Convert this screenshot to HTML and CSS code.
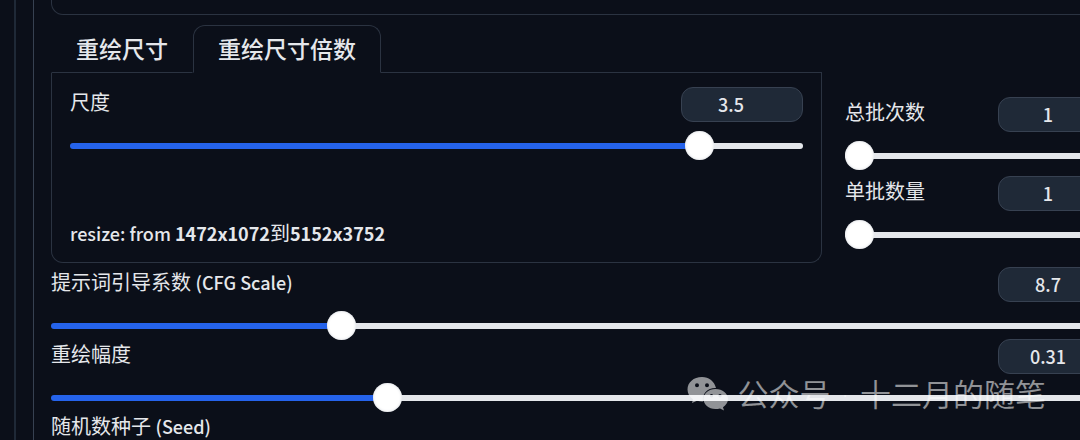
FILE: index.html
```html
<!DOCTYPE html>
<html lang="zh-CN">
<head>
<meta charset="utf-8">
<meta name="viewport" content="width=device-width, initial-scale=1">
<title>重绘尺寸倍数</title>
<link rel="stylesheet" href="styles.css">
</head>
<body>
<div class="frame">
<main class="settings">
  <div class="previous-block"></div>
  <div class="tabs" role="tablist">
    <button class="tab" type="button" role="tab" aria-selected="false">重绘尺寸</button>
    <button class="tab tab-active" type="button" role="tab" aria-selected="true">重绘尺寸倍数</button>
    <span class="tabs-rule"></span>
  </div>
  <div class="columns">
    <section class="panel" role="tabpanel">
      <div class="control">
        <div class="control-head">
          <label for="scale">尺度</label>
          <input class="number" type="text" inputmode="decimal" value="3.5" aria-label="尺度数值">
        </div>
        <input class="slider" id="scale" type="range" min="0.05" max="4" step="0.05" value="3.5" style="--fill: 87%">
      </div>
      <p class="resize-info"><span class="latin">resize: from <b>1472x1072</b></span>到<b class="latin">5152x3752</b></p>
    </section>
    <section class="batch">
      <div class="control">
        <div class="control-head">
          <label for="count">总批次数</label>
          <input class="number" type="text" inputmode="numeric" value="1" aria-label="总批次数数值">
        </div>
        <input class="slider" id="count" type="range" min="1" max="100" value="1" style="--fill: 0%">
      </div>
      <div class="control">
        <div class="control-head">
          <label for="size">单批数量</label>
          <input class="number" type="text" inputmode="numeric" value="1" aria-label="单批数量数值">
        </div>
        <input class="slider" id="size" type="range" min="1" max="8" value="1" style="--fill: 0%">
      </div>
    </section>
  </div>
  <div class="rows">
    <div class="control">
      <div class="control-head">
        <label for="cfg">提示词引导系数 <span class="latin">(CFG Scale)</span></label>
        <input class="number" type="text" inputmode="decimal" value="8.7" aria-label="CFG Scale 数值">
      </div>
      <input class="slider" id="cfg" type="range" min="1" max="30" step="0.1" value="8.7" style="--fill: 27%">
    </div>
    <div class="control">
      <div class="control-head">
        <label for="denoise">重绘幅度</label>
        <input class="number" type="text" inputmode="decimal" value="0.31" aria-label="重绘幅度数值">
      </div>
      <input class="slider" id="denoise" type="range" min="0" max="1" step="0.01" value="0.31" style="--fill: 31%">
    </div>
    <div class="seed">随机数种子 <span class="latin">(Seed)</span></div>
  </div>
</main>
</div>
<div class="watermark">
  <svg class="wechat" viewBox="0 0 42 34" aria-hidden="true">
    <path fill-rule="evenodd" d="M15 0C6.500 0 .5 5.500.5 12.500c0 4 2 7.300 5.500 9.700L5 26l5-2.300c2 .6 4 .8 6 .7C14.500 17 21 10.500 29 11 27.500 4.500 22 0 15 0ZM10 6.200a2 2 0 1 1 0 4 2 2 0 0 1 0-4ZM20 6.200a2 2 0 1 1 0 4 2 2 0 0 1 0-4Z"/>
    <path fill-rule="evenodd" d="M28.500 12C21.500 12 16.500 16.600 16.500 22s5 10 12 10c1.500 0 3-.2 4.500-.6l4 2-1-3.200c3-2 5-4.900 5-8.200 0-5.400-5.500-10-12.500-10ZM24.500 17a1.700 1.700 0 1 1 0 3.400 1.700 1.700 0 0 1 0-3.400ZM33 17a1.700 1.700 0 1 1 0 3.400 1.700 1.700 0 0 1 0-3.400Z"/>
  </svg>
  <span>公众号<span class="dot"> · </span>十二月的随笔</span>
</div>
</body>
</html>
```

FILE: styles.css
```css
* {
  box-sizing: border-box;
}

body {
  margin: 0;
  background: #0b0f19;
  color: #e5e7eb;
  font-family: "Noto Sans CJK SC", sans-serif;
  font-size: 20px;
  line-height: 30px;
  overflow: hidden;
}

.frame {
  height: 100vh;
  margin-left: 14px;
  padding-left: 17px;
  border-left: 2px solid #1f2937;
}

/* The form is wider than the window, so its right edge is cut off. */
.settings {
  min-height: 100%;
  margin-right: -40px;
  padding-left: 17px;
  border-left: 1px solid #374151;
}

.previous-block {
  height: 15px;
  border: 1px solid #2b3341;
  border-top: 0;
  border-radius: 0 0 12px 12px;
}

.columns {
  display: grid;
  grid-template-columns: 771fr 275fr;
  column-gap: 23px;
}

.tabs {
  display: flex;
  width: calc((100% - 23px) * 771 / 1046);
  padding-top: 10px;
}

.tab {
  padding: 0 24px 2px;
  border: 1px solid transparent;
  border-bottom-color: #2b3341;
  background: none;
  color: inherit;
  font: 500 23px/44px "Noto Sans CJK SC", sans-serif;
}

.tab-active {
  border-color: #2b3341;
  border-bottom-color: transparent;
  border-radius: 12px 12px 0 0;
}

.tabs-rule {
  flex: 1;
  border-bottom: 1px solid #2b3341;
}

.panel {
  padding: 14px 18px;
  border: 1px solid #2b3341;
  border-top: 0;
  border-radius: 0 0 12px 12px;
}

.batch {
  display: flex;
  flex-direction: column;
  gap: 10px;
  padding-top: 24px;
}

.rows {
  display: flex;
  flex-direction: column;
  gap: 3px;
  padding-top: 4px;
}

.control-head {
  display: flex;
  justify-content: space-between;
  align-items: flex-start;
}

.latin {
  font-size: 18px;
  font-weight: 500;
}

b,
b.latin {
  font-weight: 700;
}

.number {
  width: 122px;
  height: 35px;
  padding: 0 34px 2px 12px;
  border: 1px solid #374151;
  border-radius: 12px;
  background: #1f2937;
  color: inherit;
  font: 500 18px/30px "Noto Sans CJK SC", sans-serif;
  text-align: center;
}

.slider {
  display: block;
  width: 100%;
  height: 20px;
  margin: 14px 0 0;
  appearance: none;
  background: none;
}

.slider::-webkit-slider-runnable-track {
  height: 6px;
  border-radius: 3px;
  background: linear-gradient(to right, #2563eb var(--fill), #e5e7eb var(--fill));
}

.slider::-webkit-slider-thumb {
  width: 29px;
  height: 29px;
  margin-top: -12px;
  appearance: none;
  border-radius: 50%;
  background: #fff;
  box-shadow: inset 0 0 3px #d1d5db;
}

.resize-info {
  margin: 62px 0 0;
}

.watermark {
  position: absolute;
  right: 34px;
  bottom: 23px;
  display: flex;
  align-items: center;
  gap: 8px;
  color: #fff;
  font-size: 31px;
  font-weight: 350;
  line-height: 44px;
  opacity: 0.55;
  pointer-events: none;
}

.dot {
  font-family: "DejaVu Sans", sans-serif;
}

.wechat {
  width: 42px;
  height: 34px;
  fill: currentColor;
}
```
